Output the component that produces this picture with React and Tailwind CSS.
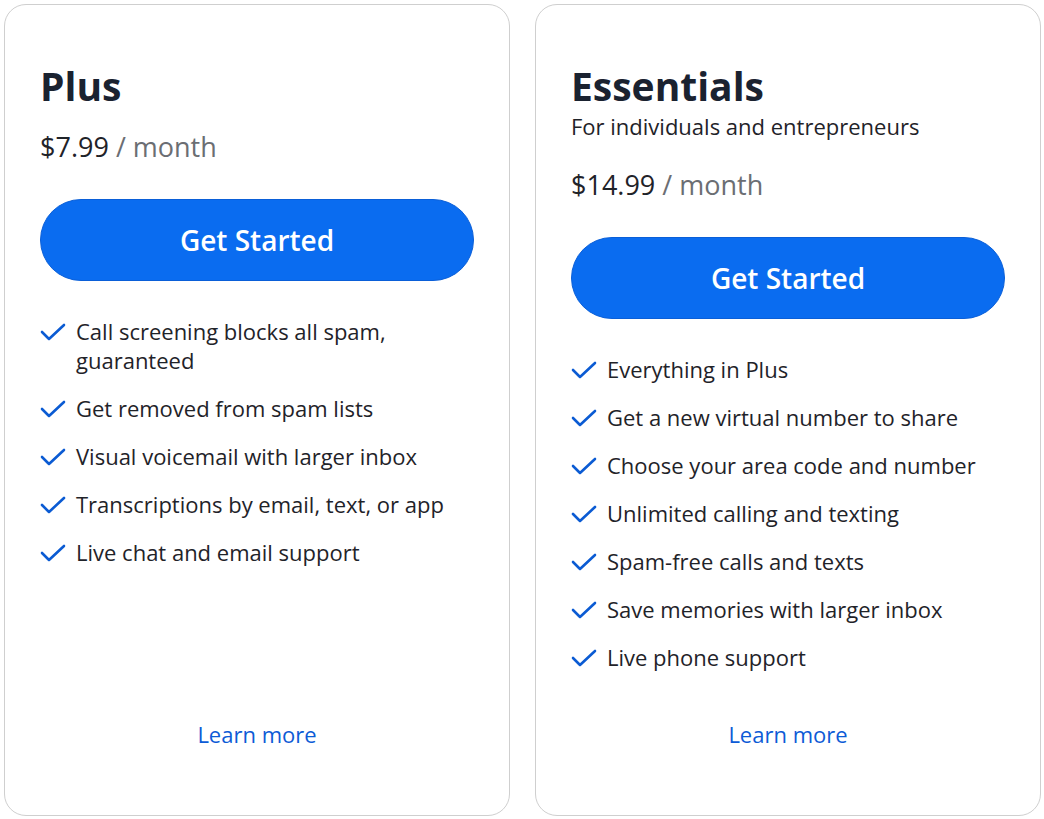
import React from "react";

const plans = [
  {
    name: "Plus",
    subtitle: null,
    price: "$7.99",
    features: [
      "Call screening blocks all spam, guaranteed",
      "Get removed from spam lists",
      "Visual voicemail with larger inbox",
      "Transcriptions by email, text, or app",
      "Live chat and email support",
    ],
  },
  {
    name: "Essentials",
    subtitle: "For individuals and entrepreneurs",
    price: "$14.99",
    features: [
      "Everything in Plus",
      "Get a new virtual number to share",
      "Choose your area code and number",
      "Unlimited calling and texting",
      "Spam-free calls and texts",
      "Save memories with larger inbox",
      "Live phone support",
    ],
  },
];

function Check() {
  return (
    <svg
      width="26"
      height="20"
      viewBox="0 0 26 20"
      fill="none"
      className="shrink-0 mt-[5px]"
    >
      <polyline
        points="2,10 9,17 24,3"
        stroke="#0b5bd3"
        strokeWidth="2.6"
        strokeLinecap="round"
        strokeLinejoin="round"
      />
    </svg>
  );
}

function PlanCard({ plan }) {
  return (
    <div className="w-[506px] h-[812px] rounded-[22px] border border-[#cfcfcf] bg-white flex flex-col px-[35px] pt-[58px] pb-[66px]">
      <h2 className="text-[39px] leading-[46px] font-bold text-[#1a2230]">
        {plan.name}
      </h2>

      {plan.subtitle && (
        <p className="text-[22px] leading-[28px] text-[#1f2329] mt-[3px]">
          {plan.subtitle}
        </p>
      )}

      <p className={`text-[27px] leading-[34px] text-[#1f2329] ${plan.subtitle ? "mt-[28px]" : "mt-[21px]"}`}>
        {plan.price} <span className="text-[#6b6e73]">/ month</span>
      </p>

      <button className="mt-[35px] h-[82px] w-full rounded-full bg-[#0a6cf0] border border-[#0a5fd8] text-white text-[28px] font-semibold">
        Get Started
      </button>

      <ul className="mt-[36px] flex flex-col gap-[19px]">
        {plan.features.map((f) => (
          <li key={f} className="flex items-start gap-[10px]">
            <Check />
            <span className="text-[22px] leading-[29px] text-[#1f2329]">
              {f}
            </span>
          </li>
        ))}
      </ul>

      <a className="mt-auto self-center text-[22px] leading-[30px] text-[#0d5bd6]">
        Learn more
      </a>
    </div>
  );
}

export default function App() {
  return (
    <div
      className="w-[1044px] h-[819px] bg-white flex gap-[25px] pt-[4px] pl-[4px]"
      style={{ fontFamily: "'Open Sans', 'Lato', sans-serif" }}
    >
      {plans.map((p) => (
        <PlanCard key={p.name} plan={p} />
      ))}
    </div>
  );
}
